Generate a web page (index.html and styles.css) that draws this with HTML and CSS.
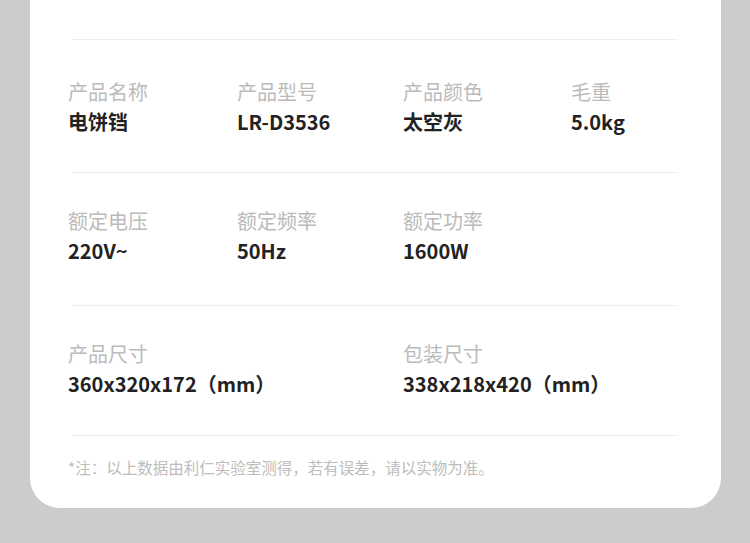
FILE: index.html
```html
<!DOCTYPE html>
<html lang="zh-CN">
<head>
    <meta charset="UTF-8">
    <meta name="viewport" content="width=device-width, initial-scale=1.0">
    <title>产品参数</title>
    <link rel="stylesheet" href="styles.css">
</head>
<body>

    <div class="card">
        <div class="spec-row spec-row-first">
            <div class="spec">
                <div class="spec-label">产品名称</div>
                <div class="spec-value">电饼铛</div>
            </div>
            <div class="spec">
                <div class="spec-label">产品型号</div>
                <div class="spec-value">LR-D3536</div>
            </div>
            <div class="spec">
                <div class="spec-label">产品颜色</div>
                <div class="spec-value">太空灰</div>
            </div>
            <div class="spec">
                <div class="spec-label">毛重</div>
                <div class="spec-value">5.0kg</div>
            </div>
        </div>

        <div class="spec-row">
            <div class="spec">
                <div class="spec-label">额定电压</div>
                <div class="spec-value">220V~</div>
            </div>
            <div class="spec">
                <div class="spec-label">额定频率</div>
                <div class="spec-value">50Hz</div>
            </div>
            <div class="spec">
                <div class="spec-label">额定功率</div>
                <div class="spec-value">1600W</div>
            </div>
        </div>

        <div class="spec-row spec-row-last">
            <div class="spec spec-wide">
                <div class="spec-label">产品尺寸</div>
                <div class="spec-value">360x320x172（mm）</div>
            </div>
            <div class="spec spec-wide">
                <div class="spec-label">包装尺寸</div>
                <div class="spec-value">338x218x420（mm）</div>
            </div>
        </div>

        <div class="note">
            <p class="note-text">*注：以上数据由利仁实验室测得，若有误差，请以实物为准。</p>
        </div>
    </div>

</body>
</html>
```

FILE: styles.css
```css
* {
    margin: 0;
    padding: 0;
    box-sizing: border-box;
}

html,
body {
    height: 100%;
}

body {
    font-family: "Noto Sans CJK SC", "Noto Sans", sans-serif;
    background-color: #cccccc;
    overflow: hidden;
}

.card {
    width: 691px;
    margin-left: 30px;
    padding-top: 39px;
    padding-bottom: 30px;
    background-color: #fff;
    border-radius: 0 0 30px 30px;
}

.spec-row {
    display: grid;
    grid-template-columns: 169px 166px 168px 168px;
    margin: 0 43px 0 42px;
    padding: 33px 0 39px;
    border-top: 1px solid #eeeeee;
}

.spec-row-first {
    padding: 37px 0 35px;
}

.spec-row-last {
    padding: 33px 0 36px;
}

.spec {
    margin-left: -4px;
}

.spec-wide {
    grid-column: span 2;
}

.spec-label {
    font-size: 20px;
    line-height: 30px;
    color: #bbbbbb;
}

.spec-value {
    font-size: 20px;
    line-height: 30px;
    font-weight: bold;
    color: #222222;
}

.note {
    margin: 0 43px 0 42px;
    padding-top: 20px;
    border-top: 1px solid #eeeeee;
}

.note-text {
    margin-left: -4px;
    font-size: 15.5px;
    line-height: 22px;
    color: #bdbdbd;
}
```
